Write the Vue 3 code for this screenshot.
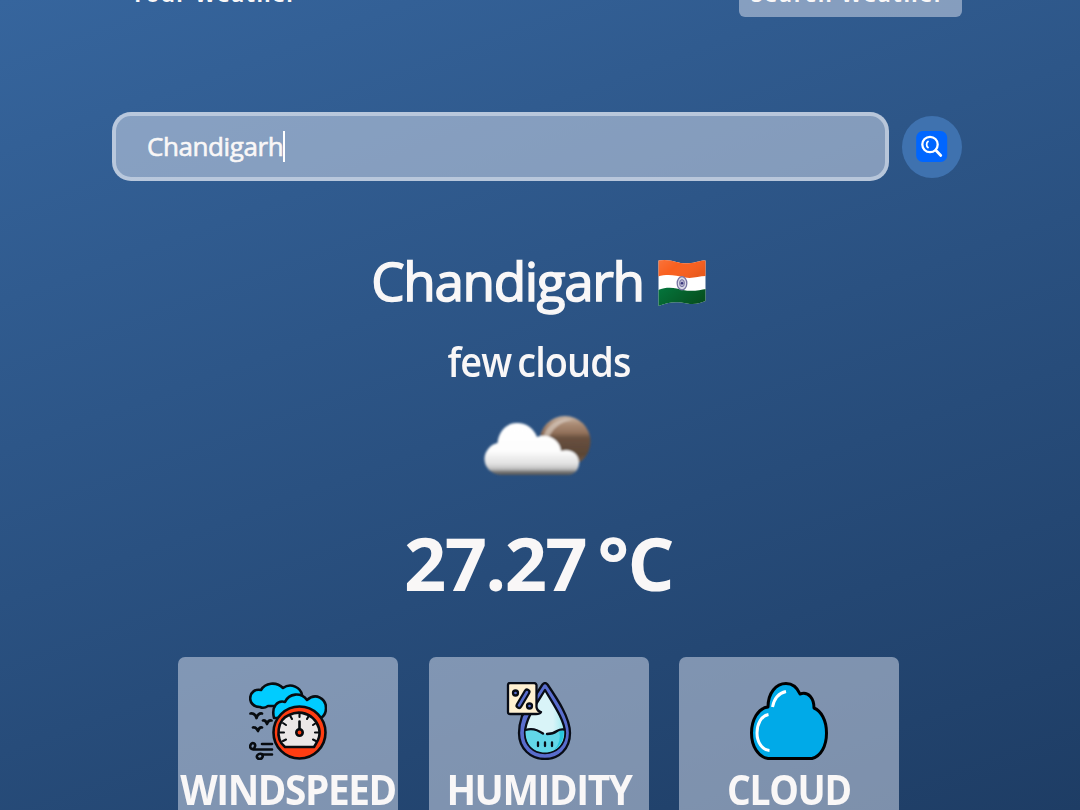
<script setup>
const city = 'Chandigarh'
</script>

<template>
  <main class="page">
    <div class="shell">
      <nav class="tabs">
        <span class="tab"><span class="t-your">Your Weather</span></span>
        <span class="tab active"><span class="t-search">Search Weather</span></span>
      </nav>

      <form class="search" @submit.prevent>
        <div class="field"><span class="typed">{{ city }}</span><i class="caret"></i></div>
        <button class="go" type="submit" aria-label="Search">
          <svg width="32" height="32" viewBox="0 0 32 32" fill="none" stroke="#fff" stroke-linecap="round">
            <rect x=".2" y="0" width="31" height="31" rx="6.5" fill="#06f" stroke="none" />
            <circle cx="14" cy="13.500" r="7.700" stroke-width="2.300" />
            <path d="M19.800 19.200L24.800 24.500" stroke-width="2.700" />
            <path d="M12 10.500C10.200 11.700 10.200 15.200 12 16.500" stroke-width="1.800" />
          </svg>
        </button>
      </form>

      <section class="result">
        <h1 class="place">
          <span class="city">{{ city }}</span>
          <svg class="flag" width="48" height="48" viewBox="0 0 48 48">
            <defs>
              <linearGradient id="shade" x1="0" y1="0" x2="1" y2=".5">
                <stop offset="0" stop-color="#fff" stop-opacity=".13" />
                <stop offset=".45" stop-color="#fff" stop-opacity="0" />
                <stop offset="1" stop-color="#000" stop-opacity=".06" />
              </linearGradient>
              <linearGradient id="green" x1="0" y1="0" x2="1" y2=".5">
                <stop offset="0" stop-color="#04763d" /><stop offset="1" stop-color="#06501f" />
              </linearGradient>
              <clipPath id="wave"><path d="M.5 1.5C14-1 20 6 33 4C40 3 44 1 47.500 1.500V42C43 44 37 46 29 44.500C18 42 10 43 .5 47Z" /></clipPath>
            </defs>
            <g clip-path="url(#wave)">
              <rect width="48" height="48" fill="#fff" />
              <path d="M0 0H48V17C40 17 35 20 27 18.500C17 16 9 15 0 17.500Z" fill="#f9601f" />
              <path d="M0 31C10 27 18 29 25 31C34 33 42 31 48 30V48H0Z" fill="url(#green)" />
              <path d="M0 0H48V17C40 17 35 20 27 18.500C17 16 9 15 0 17.500Z" fill="url(#shade)" />
            </g>
            <ellipse cx="24" cy="24.2" rx="4.800" ry="6.600" fill="#dcdbe8" stroke="#7774a2" stroke-width="1.300" />
            <ellipse cx="24" cy="24.2" rx="2.400" ry="3.600" fill="#b5b2cf" stroke="#7774a2" />
            <circle cx="24" cy="24.2" r="1.300" fill="#39367c" />
          </svg>
        </h1>
        <p class="desc">few clouds</p>
        <svg class="sky" width="124" height="72" viewBox="0 0 124 72">
          <defs>
            <linearGradient id="sun" x1="0" y1="0" x2="0" y2="1">
              <stop offset="0" stop-color="#c9b6a6" /><stop offset=".16" stop-color="#aa8b74" />
              <stop offset=".33" stop-color="#92715b" /><stop offset=".43" stop-color="#69503f" />
              <stop offset=".75" stop-color="#5b4636" /><stop offset="1" stop-color="#80654f" />
            </linearGradient>
            <linearGradient id="puff" gradientUnits="userSpaceOnUse" x1="0" y1="12" x2="0" y2="66">
              <stop offset="0" stop-color="#fff" /><stop offset=".55" stop-color="#fdfdfd" />
              <stop offset=".8" stop-color="#e0e0e0" /><stop offset=".89" stop-color="#bdbdbd" />
              <stop offset=".94" stop-color="#777" /><stop offset="1" stop-color="#555" />
            </linearGradient>
            <filter id="soft" x="-5%" y="-5%" width="110%" height="115%"><feGaussianBlur stdDeviation="1" /></filter>
          </defs>
          <g filter="url(#soft)">
            <circle cx="88" cy="32.500" r="25.500" fill="url(#sun)" />
            <path d="M66 29A24 24 0 0 1 96 11C83 12 75 20 70 32Z" fill="#dccfc4" opacity=".65" />
            <path d="M24 66C14 65 7 58 7.500 49C8 42 14 35 20.500 34C22 21 30 14 40 14C50 14 57 20 60 28C71 24 83 31 84 42C93 39 102 44 102 54C102 61 97 66 91 66Z" fill="url(#puff)" />
          </g>
        </svg>
        <p class="temp">27.27 °C</p>
      </section>

      <section class="cards">
        <article class="card">
          <svg width="78" height="78" viewBox="0 0 78 78" stroke="#080c10" stroke-width="2.600" stroke-linecap="round" stroke-linejoin="round" fill="none">
            <path d="M11 25C4 25 1 20 1.200 16C1.500 10 6 7 12 8C16 1 27-1 34 6C42 0 52 6 53 13V24H24L19 24C16 26 13 26 11 25Z" fill="#0cf" />
            <path d="M25 36C22 24 29 18 36 20C40 11 52 10 58 18C67 10 77 17 77 26C77 31 75 34 72 36Z" fill="#0cf" />
            <circle cx="50.500" cy="50.500" r="26" fill="#ff3d12" />
            <path d="M36 65C25 56 29 37 40 33C58 24 76 42 69 58Q67 62 65 65Z" fill="#ebe7e7" />
            <path d="M50.500 31V35M41 33.500L43 37M60 33.500L58 37M34 41L37 43M67 41L64 43M31 50.500H35M66 50.500H70M34 59L37 57.500M67 59L64 57.500" stroke-width="2.100" />
            <path d="M50.500 47V39.500" /><circle cx="50.500" cy="50.500" r="3.200" fill="#ff3d12" stroke-width="2.600" />
            <path d="M1.500 31.500Q6 31 7.500 36Q9 31 13 31.500M14 38.500Q17 38 18 42Q19 38 22.500 38.500M4 45.500Q7 45 9 49Q10 45 13 45.500" stroke-width="2.700" />
            <path d="M13 62H23M5.500 65.500C8 62 3 59 1.500 63C0 67 4 67.500 7 67.500H23M14 72.500C9 70 6 75 9 76.500C12 78 15 75 13 72.500H23" />
          </svg>
          <h2 class="c1">WINDSPEED</h2>
        </article>
        <article class="card">
          <svg width="78" height="78" viewBox="0 0 78 78" stroke="#080c16" stroke-width="2.300" stroke-linecap="round" stroke-linejoin="round">
            <defs><linearGradient id="drop"><stop offset=".7" stop-color="#d9f4f8" /><stop offset="1" stop-color="#9deaf0" /></linearGradient></defs>
            <path d="M42.500 2.500Q45-.5 47.500 2.500C58 18 70 36 70 51C70 67 59 77 45 77C31 77 19 67 19 51C19 45 20 40 22 34Z" fill="#596dcd" />
            <path d="M45 8C54 23 65 39 65 51C65 63 56 71 45 71C33 71 25 63 25 51C25 37 37 21 45 8Z" fill="url(#drop)" />
            <path d="M25.500 48Q32 45 39 49Q44 52 47 52Q56 50 64 47C66 61 57 70.500 45 70.500C33 70.500 25 62 25.500 48Z" fill="#62d7e8" stroke="none" />
            <path d="M59 48Q62 60 54 68Q64 62 64 49Z" fill="#29c6dc" stroke="none" />
            <path d="M25.500 48Q34 45 43 51.500M47 52Q53 52 57 49Q60 47 64 47.500" fill="none" />
            <path d="M38 60.500V64M45 60.500V64M52 60.500V64" />
            <path d="M10 1H34Q36 1 36.500 3V25Q37 29 41 30Q40 32 36 32H10Q8 32 8 30V3Q8 1 10 1Z" fill="#fff1d2" />
            <path d="M19 23.500L27 10" stroke-width="7" /><path d="M19 23.500L27 10" stroke="#596dcd" stroke-width="2.600" />
            <circle cx="15.500" cy="11" r="2.500" fill="#596dcd" /><circle cx="29.500" cy="24" r="2.500" fill="#596dcd" />
          </svg>
          <h2 class="c2">HUMIDITY</h2>
        </article>
        <article class="card">
          <svg width="78" height="78" viewBox="0 0 78 78" fill="none" stroke-linejoin="round">
            <path d="M18 76.500C8 75 1.500 64 1.500 51C1.500 38 8 26 18 25C18 11 26 1.500 36 1.500C42 1.500 47 5 50 12C59 9 64 17 64 26C71 29 76.500 38 76.500 51C76.500 64 71 74 62 76.500Z" fill="#00aae8" stroke="#000" stroke-width="3" />
            <path d="M36 9.500Q25 12 22.500 25M18.500 32.500C11 34 7 42 7 51C7 60 12 68 19.500 68.500" stroke="#fff" stroke-width="3" />
          </svg>
          <h2 class="c3">CLOUD</h2>
        </article>
      </section>
    </div>
  </main>
</template>

<style>
html, body { margin: 0; overflow: hidden; }
</style>

<style scoped>
.page {
  height: 810px;
  overflow: hidden;
  color: #f9f7f7;
  font-family: "Open Sans", "Noto Sans", sans-serif;
  background: linear-gradient(160deg, #36659d 0%, #1e3d65 100%);
}
.page * { box-sizing: border-box; }
.shell { width: 850px; margin-left: 112px; display: flex; flex-direction: column; }
.tabs { display: flex; justify-content: space-between; height: 17px; align-items: flex-end; }
.tab { height: 48px; flex: none; padding: 8px 12px 6px; border-radius: 6px; font-size: 21.500px; font-weight: 700; line-height: 34px; white-space: pre; }
.tab:first-child { padding-left: 19px; }
.active { width: 223px; background: rgba(219, 226, 239, .5); }
.t-your { letter-spacing: 1.500px; }
.t-search { letter-spacing: 1.700px; }
.search { display: flex; gap: 13px; align-items: center; height: 69px; margin: 95px 0 0; }
.field { width: 777px; height: 69px; display: flex; align-items: center; padding: 0 31px; border: 4px solid rgba(219, 226, 239, .6); border-radius: 19px; background: rgba(219, 226, 239, .5); }
.typed { margin-top: -2px; font-size: 26px; font-weight: 400; line-height: 34px; letter-spacing: -.4px; -webkit-text-stroke: .6px #f9f7f7; }
.caret { width: 2px; height: 31px; background: #fff; }
.go { width: 60px; height: 62px; padding: 0; border: 0; border-radius: 50%; background: #3f72af; display: grid; place-items: center; }
.result { display: flex; flex-direction: column; align-items: center; width: 853px; margin-top: 63px; }
.place { display: flex; align-items: center; gap: 14px; margin: 0; height: 74px; font-size: 53px; font-weight: 400; line-height: 74px; }
.city { letter-spacing: -1.350px; -webkit-text-stroke: 1.500px #f9f7f7; }
.flag { flex: none; position: relative; top: 2px; }
.desc { margin: 15px 0 0; height: 56px; font-size: 41px; font-weight: 600; line-height: 56px; letter-spacing: -1px; word-spacing: -3px; transform: scaleX(.925); }
.sky { margin-top: 20px; }
.temp { margin: 32px 0 0; height: 100px; font-size: 74px; font-weight: 700; line-height: 100px; letter-spacing: -1.700px; word-spacing: -6px; white-space: nowrap; }
.cards { display: flex; gap: 30.500px; margin: 43.500px 0 0 66px; }
.card { width: 220px; height: 190px; flex: none; border-radius: 7px; background: rgba(219, 226, 239, .5); display: flex; flex-direction: column; align-items: center; padding-top: 25px; }
.card svg { flex: none; }
h2 { margin: 1px 0 0; font-size: 41px; font-weight: 700; line-height: 56px; letter-spacing: -1.500px; white-space: nowrap; transform: scaleX(.945); }
.c3 { transform: scaleX(.91); }
</style>
